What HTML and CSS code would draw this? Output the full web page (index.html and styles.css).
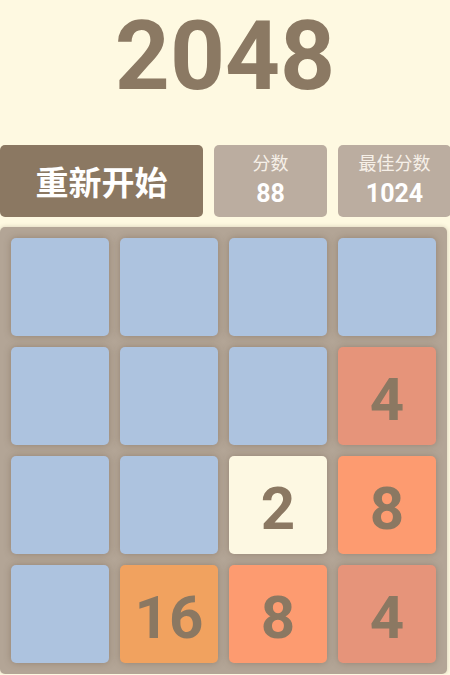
FILE: index.html
```html
<!DOCTYPE html>
<html lang="zh-CN">
<head>
    <meta charset="UTF-8">
    <meta name="viewport" content="width=device-width, initial-scale=1.0">
    <title>2048</title>
    <link rel="stylesheet" href="styles.css">
</head>
<body>
    <div class="header">
        <h1 class="title">2048</h1>
    </div>

    <div class="top-bar">
        <button class="restart">重新开始</button>
        <div class="score-box">
            <span class="label">分数</span>
            <span class="value">88</span>
        </div>
        <div class="score-box">
            <span class="label">最佳分数</span>
            <span class="value">1024</span>
        </div>
    </div>

    <div class="board">
        <div class="tile"></div>
        <div class="tile"></div>
        <div class="tile"></div>
        <div class="tile"></div>

        <div class="tile"></div>
        <div class="tile"></div>
        <div class="tile"></div>
        <div class="tile tile-4">4</div>

        <div class="tile"></div>
        <div class="tile"></div>
        <div class="tile tile-2">2</div>
        <div class="tile tile-8">8</div>

        <div class="tile"></div>
        <div class="tile tile-16">16</div>
        <div class="tile tile-8">8</div>
        <div class="tile tile-4">4</div>
    </div>
</body>
</html>
```

FILE: styles.css
```css
body {
    font-family: "Noto Sans CJK SC", "Noto Sans", sans-serif;
    margin: 0;
    padding: 0;
    background-color: #fef9e1;
    overflow: hidden;
}
.header {
    height: 145px;
    text-align: center;
}
/* digits use a latin face, wider than the CJK one */
.title,
.score-box .value,
.tile {
    font-family: Roboto, "Noto Sans", sans-serif;
}
.title {
    margin: 0;
    font-size: 96px;
    font-weight: 700;
    color: #8b7963;
}
.top-bar {
    display: flex;
    gap: 11px;
    height: 72px;
}
.restart {
    width: 203px;
    flex-shrink: 0;
    border: none;
    border-radius: 5px;
    background-color: #8b7862;
    color: #fff;
    font-family: inherit;
    font-size: 33px;
    font-weight: 700;
    cursor: pointer;
    padding: 0;
}
.score-box {
    width: 113px;
    flex-shrink: 0;
    display: flex;
    flex-direction: column;
    align-items: center;
    padding-top: 6px;
    box-sizing: border-box;
    border-radius: 5px;
    background-color: #bbada0;
    color: #fff;
}
.score-box .label {
    font-size: 18px;
    line-height: 22px;
    color: #f6f0e8;
}
.score-box .value {
    margin-top: 6px;
    font-size: 25px;
    line-height: 30px;
    font-weight: 700;
}
.board {
    margin-top: 10px;
    width: 447px;
    box-sizing: border-box;
    padding: 11px;
    display: grid;
    grid-template-columns: repeat(4, 98px);
    grid-auto-rows: 98px;
    gap: 11px;
    border-radius: 5px;
    background-color: #b3a596;
    box-shadow: 0 0 4px rgba(90, 70, 50, 0.25);
}
.tile {
    display: flex;
    align-items: center;
    justify-content: center;
    padding-top: 6px;
    box-sizing: border-box;
    border-radius: 5px;
    background-color: #adc3df;
    box-shadow: 0 0 7px rgba(90, 70, 50, 0.35);
    color: #8b7862;
    font-size: 60px;
    font-weight: 700;
}
.tile-2 {
    background-color: #fdf8e2;
}
.tile-4 {
    background-color: #e6947a;
}
.tile-8 {
    background-color: #fd9b70;
}
.tile-16 {
    background-color: #f1a25f;
}
```
